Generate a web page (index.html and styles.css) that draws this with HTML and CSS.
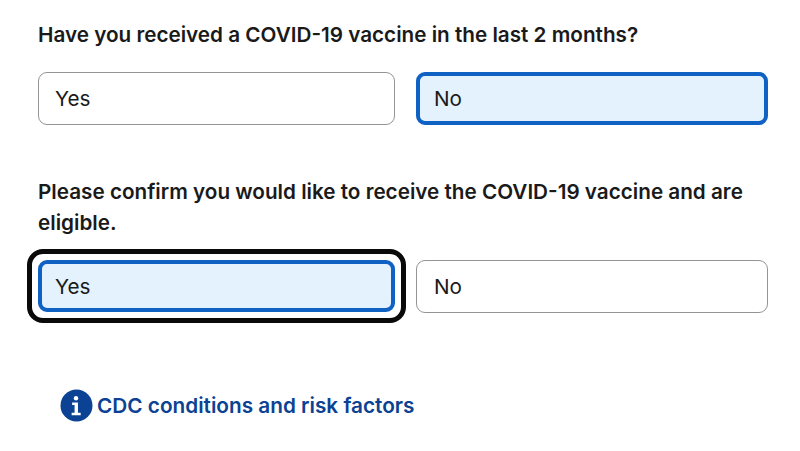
FILE: index.html
```html
<!DOCTYPE html>
<html lang="en">
<head>
<meta charset="utf-8">
<title>Vaccine questions</title>
<link rel="stylesheet" href="styles.css">
</head>
<body>
<main class="form">
  <section class="question first">
    <h2 class="label">Have you received a COVID-19 vaccine in the last 2 months?</h2>
    <div class="options">
      <div class="option">Yes</div>
      <div class="option selected">No</div>
    </div>
  </section>
  <section class="question second">
    <h2 class="label">Please confirm you would like to receive the COVID-19 vaccine and are eligible.</h2>
    <div class="options">
      <div class="focus-ring"><div class="option selected">Yes</div></div>
      <div class="option">No</div>
    </div>
  </section>
  <a class="info-link" href="#">
    <svg class="info-icon" viewBox="0 0 34 34" aria-hidden="true">
      <circle cx="17" cy="17" r="16.5" fill="#0b4293"/>
      <circle cx="16.500" cy="9.500" r="2.300" fill="#fff"/>
      <path d="M12.500 14h6v10.500h2.800v2.500h-9.300v-2.500h3v-8h-2.500z" fill="#fff"/>
    </svg>
    <span>CDC conditions and risk factors</span>
  </a>
</main>
</body>
</html>
```
FILE: styles.css
```css
* { box-sizing: border-box; }
html, body { margin: 0; padding: 0; }
body { width: 800px; height: 451px; overflow: hidden; background: #fff; color: #111; font-family: Inter, "Liberation Sans", sans-serif; }
.form { padding: 19px 32px 0 38px; }
.label { margin: 0; font-size: 20.700px; line-height: 31px; font-weight: 600; color: #1a1a1a; }
.options { display: grid; grid-template-columns: 357px 352px; column-gap: 21px; margin-top: 22px; }
.option { height: 53px; display: flex; align-items: center; padding-left: 16px; border: 1px solid #949494; border-radius: 9px; background: #fff; font-size: 20.700px; color: #1a1a1a; }
.option + .option, .focus-ring + .option { padding-left: 17px; }
.option.selected { background: #e4f2fe; border: 4px solid #0f62c4; padding-left: 13px; }
.option + .option.selected { padding-left: 14px; }
.question.second { margin-top: 51px; }
.question.second .options { margin-top: 22px; }
.focus-ring { position: relative; }
.focus-ring .option { height: 52px; }
.focus-ring::before { content: ""; position: absolute; inset: -11px -11px -10px -11px; border: 5px solid #0a0a0a; border-radius: 16px; }
.info-link { display: inline-flex; align-items: center; gap: 4px; margin: 76px 0 0 22px; color: #0b4293; font-size: 20.750px; font-weight: 600; text-decoration: none; }
.info-icon { width: 33px; height: 33px; flex: none; }
```
